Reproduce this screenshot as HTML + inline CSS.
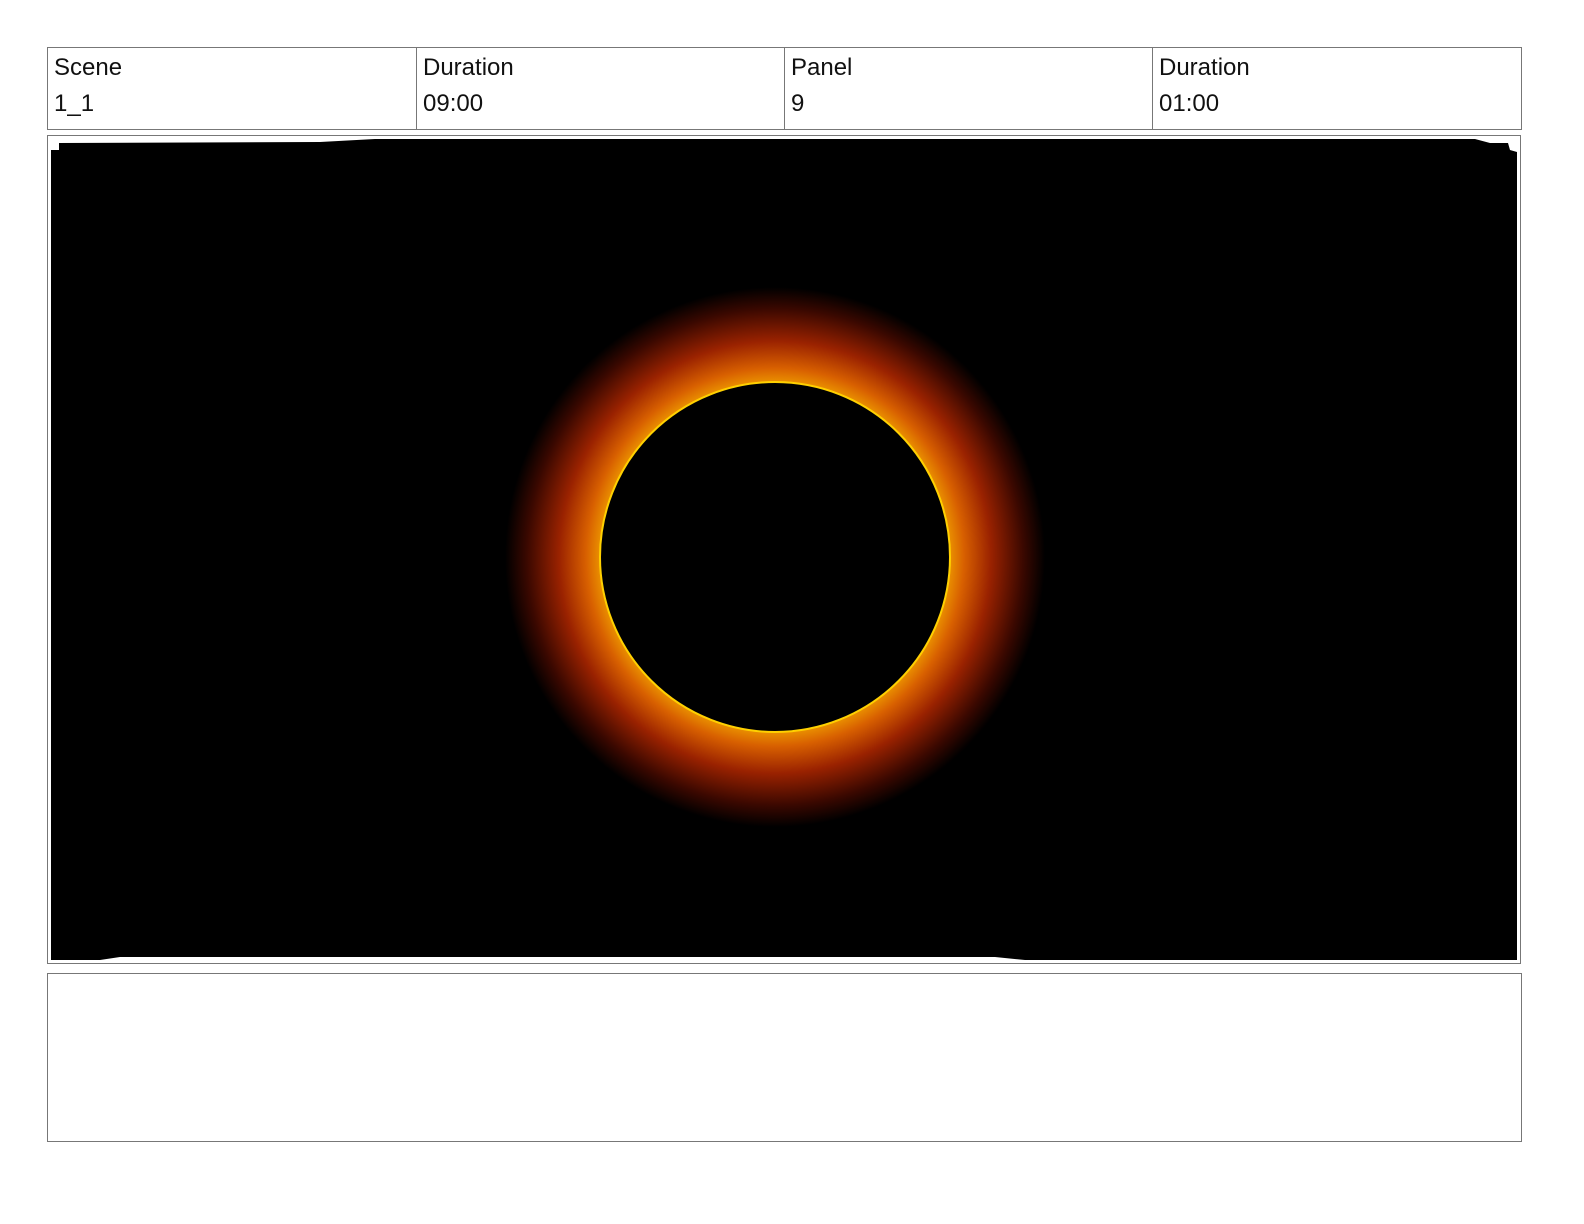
<!DOCTYPE html>
<html><head><style>
body{margin:0;width:1584px;height:1224px;background:#fff;position:relative;font-family:"Liberation Sans",sans-serif;overflow:hidden}
.b{position:absolute;border:1px solid #777;box-sizing:border-box}
.c{position:absolute;top:47px;height:83px;border-left:1px solid #777;box-sizing:border-box;padding-left:6px;font-size:24px;color:#111;line-height:36px;padding-top:3px}
</style></head><body>
<div class="b" style="left:47px;top:47px;width:1475px;height:83px"></div>
<div class="c" style="left:47px;width:369px">Scene<br>1_1</div>
<div class="c" style="left:416px;width:368px">Duration<br>09:00</div>
<div class="c" style="left:784px;width:368px">Panel<br>9</div>
<div class="c" style="left:1152px;width:369px">Duration<br>01:00</div>
<div class="b" style="left:47px;top:135px;width:1474px;height:829px"></div>
<svg style="position:absolute;left:0;top:0" width="1584" height="1224">
<defs><radialGradient id="g" cx="775" cy="557" r="270" gradientUnits="userSpaceOnUse">
<stop offset="0.63" stop-color="#f0a000"/>
<stop offset="0.7" stop-color="#d86000"/>
<stop offset="0.8" stop-color="#9a2200"/>
<stop offset="0.92" stop-color="#3a0800"/>
<stop offset="1" stop-color="#000"/></radialGradient></defs>
<path d="M59 143 L320 142 L375 139 L1475 139 L1490 143 L1508 143 L1510 150 L1517 152 L1517 960 L1025 960 L995 957 L120 957 L100 960 L51 960 L51 150 L59 150 Z" fill="#000"/>
<circle cx="775" cy="557" r="270" fill="url(#g)"/>
<circle cx="775" cy="557" r="175" fill="#000" stroke="#ffd000" stroke-width="2"/>
</svg>
<div class="b" style="left:47px;top:973px;width:1475px;height:169px"></div>
</body></html>
